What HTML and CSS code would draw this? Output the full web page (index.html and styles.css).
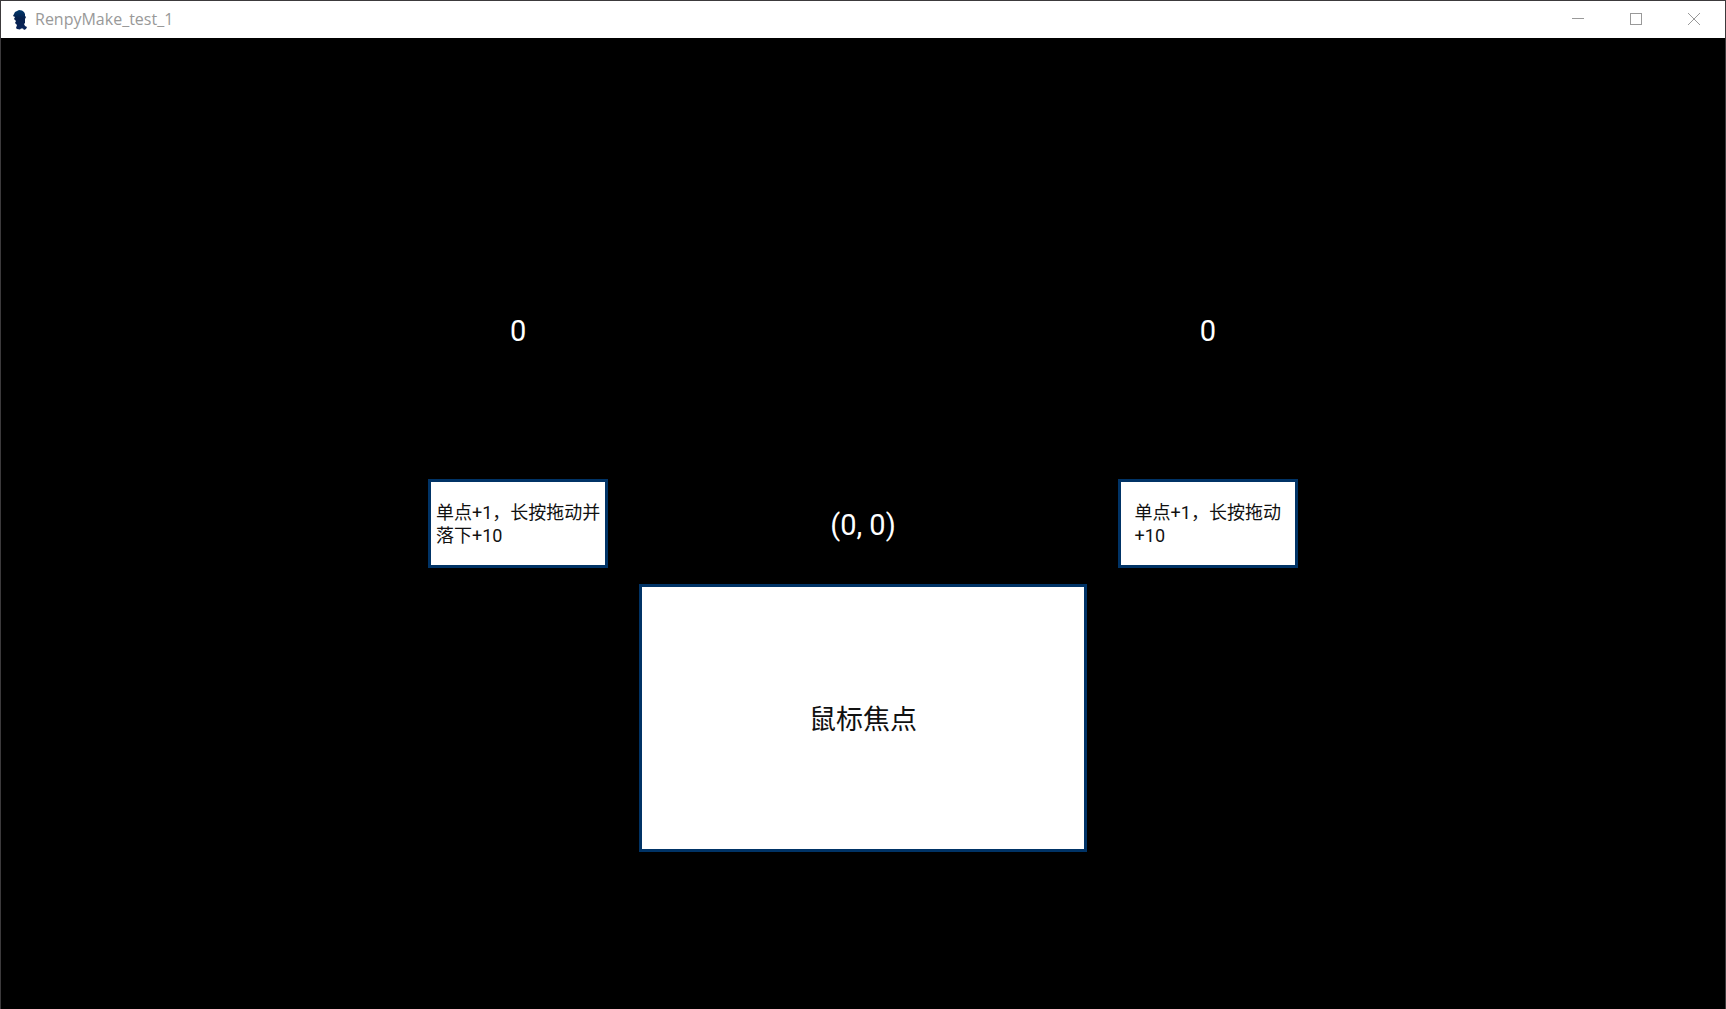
FILE: index.html
```html
<!DOCTYPE html>
<html lang="zh-CN">
<head>
    <meta charset="UTF-8">
    <meta name="viewport" content="width=device-width, initial-scale=1.0">
    <title>RenpyMake_test_1</title>
    <link rel="stylesheet" href="styles.css">
</head>
<body>
    <div class="window">
        <header class="titlebar">
            <svg class="app-icon" viewBox="0 0 14 20" aria-hidden="true">
                <defs>
                    <linearGradient id="iconFill" x1="0" y1="0" x2="0" y2="1">
                        <stop offset="0" stop-color="#003a6e"></stop>
                        <stop offset="0.4" stop-color="#06204c"></stop>
                        <stop offset="1" stop-color="#08245a"></stop>
                    </linearGradient>
                </defs>
                <path fill="url(#iconFill)" d="M4 1 L6 0 L9 0.5 L11 2 L12 4 L12 6 L13 7 L12 9 L12 13 L11 14 L12 16 L14 17 L13 19 L11 20 L10 18.5 L8 18.5 L7 19.5 L4 19 L3 18 L4 15 L3 14 L2 13 L3 11 L1 9 L2 7 L0 6 L1 4 L2 2 Z"></path>
            </svg>
            <span class="title">RenpyMake_test_1</span>
            <div class="controls">
                <button type="button" aria-label="Minimize">
                    <svg viewBox="0 0 12 12"><path d="M0 5.5 H12"></path></svg>
                </button>
                <button type="button" aria-label="Maximize">
                    <svg viewBox="0 0 12 12"><rect x="0.5" y="0.5" width="11" height="11"></rect></svg>
                </button>
                <button type="button" aria-label="Close">
                    <svg viewBox="0 0 12 12"><path d="M0 0 L12 12 M12 0 L0 12"></path></svg>
                </button>
            </div>
        </header>

        <main class="stage">
            <output class="value left">0</output>
            <output class="value right">0</output>

            <button type="button" class="box small drop">单点+1，长按拖动并<br>落下+10</button>
            <output class="value position">(0, 0)</output>
            <button type="button" class="box small drag">单点+1，长按拖动<br>+10</button>

            <button type="button" class="box focus">鼠标焦点</button>
        </main>
    </div>
</body>
</html>
```

FILE: styles.css
```css
* {
    box-sizing: border-box;
}
body {
    margin: 0;
    background-color: black;
    font-family: Roboto, "Noto Sans CJK SC", sans-serif;
}
.window {
    display: flex;
    flex-direction: column;
    height: 100vh;
    border: 1px solid #3c3a3c;
    border-bottom: none;
}
/* Title bar */
.titlebar {
    display: flex;
    align-items: center;
    height: 37px;
    padding: 0 2px 0 12px;
    background-color: white;
}
.app-icon {
    width: 14px;
    height: 20px;
}
.title {
    margin-left: 8px;
    padding-bottom: 2px;
    font-family: "Open Sans", sans-serif;
    font-size: 16px;
    line-height: 22px;
    color: #999;
}
.controls {
    display: flex;
    align-self: stretch;
    margin-left: auto;
}
.controls button {
    display: flex;
    align-items: center;
    justify-content: center;
    width: 58px;
    padding: 0 0 1px;
    border: none;
    background: none;
}
.controls button:hover {
    background-color: #e5e5e5;
}
.controls svg {
    width: 12px;
    height: 12px;
    fill: none;
    stroke: #999;
}
/* Game screen, everything sits on fifths of the stage */
.stage {
    flex: 1;
    display: grid;
    grid-template-columns: repeat(5, 20%);
    grid-template-rows: repeat(5, 20%);
    place-items: center;
    background-color: black;
}
.value {
    padding-top: 4px;
    font-size: 29px;
    line-height: 40px;
    color: white;
}
.left {
    grid-area: 2 / 2;
}
.right {
    grid-area: 2 / 4;
}
.position {
    grid-area: 3 / 3;
}
.box {
    display: flex;
    align-items: center;
    justify-content: center;
    padding: 0;
    border: 3px solid #003366;
    background-color: white;
    color: #111;
    font-family: inherit;
    text-align: left;
    white-space: nowrap;
}
.small {
    width: 180px;
    height: 89px;
    padding-top: 2px;
    font-size: 18px;
    line-height: 23px;
}
.drop {
    grid-area: 3 / 2;
}
.drag {
    grid-area: 3 / 4;
}
.focus {
    grid-area: 4 / 1 / 5 / 6;
    width: 448px;
    height: 268px;
    font-size: 27px;
}
```
